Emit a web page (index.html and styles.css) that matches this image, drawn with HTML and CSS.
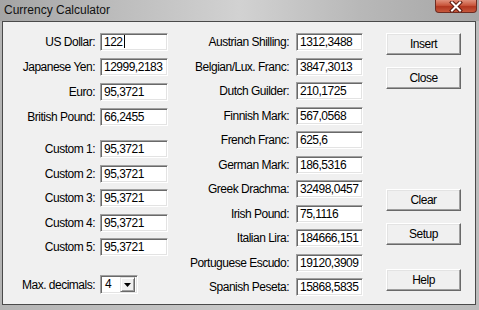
FILE: index.html
```html
<!DOCTYPE html>
<html lang="en">
<head>
    <meta charset="UTF-8">
    <title>Currency Calculator</title>
    <link rel="stylesheet" href="styles.css">
</head>
<body>

    <div class="window">
        <div class="titlebar">
            <span class="title">Currency Calculator</span>
            <div class="close-btn">
                <svg width="16" height="11" viewBox="0 0 16 11">
                    <path d="M4 1.5 L12 9.5 M12 1.5 L4 9.5" stroke="#5a1a10" stroke-width="4" stroke-linecap="square"/>
                    <path d="M4 1.5 L12 9.5 M12 1.5 L4 9.5" stroke="#ffffff" stroke-width="2" stroke-linecap="square"/>
                </svg>
            </div>
        </div>

        <div class="client">
            <div class="col-left">
                <div class="rows rows-main">
                    <label>US Dollar:</label><div class="field">122<span class="caret"></span></div>
                    <label>Japanese Yen:</label><div class="field">12999,2183</div>
                    <label>Euro:</label><div class="field">95,3721</div>
                    <label>British Pound:</label><div class="field">66,2455</div>
                </div>
                <div class="rows rows-custom">
                    <label>Custom 1:</label><div class="field">95,3721</div>
                    <label>Custom 2:</label><div class="field">95,3721</div>
                    <label>Custom 3:</label><div class="field">95,3721</div>
                    <label>Custom 4:</label><div class="field">95,3721</div>
                    <label>Custom 5:</label><div class="field">95,3721</div>
                </div>
                <div class="rows rows-decimals">
                    <label>Max. decimals:</label>
                    <div class="combo">
                        <span class="combo-value">4</span>
                        <span class="combo-btn">
                            <svg width="7" height="4" viewBox="0 0 7 4"><path d="M0 0 H7 L3.5 4 Z" fill="#000"/></svg>
                        </span>
                    </div>
                </div>
            </div>

            <div class="rows col-right">
                <label>Austrian Shilling:</label><div class="field">1312,3488</div>
                <label>Belgian/Lux. Franc:</label><div class="field">3847,3013</div>
                <label>Dutch Guilder:</label><div class="field">210,1725</div>
                <label>Finnish Mark:</label><div class="field">567,0568</div>
                <label>French Franc:</label><div class="field">625,6</div>
                <label>German Mark:</label><div class="field">186,5316</div>
                <label>Greek Drachma:</label><div class="field">32498,0457</div>
                <label>Irish Pound:</label><div class="field">75,1116</div>
                <label>Italian Lira:</label><div class="field">184666,151</div>
                <label>Portuguese Escudo:</label><div class="field">19120,3909</div>
                <label>Spanish Peseta:</label><div class="field">15868,5835</div>
            </div>

            <div class="buttons">
                <button class="btn btn-insert">Insert</button>
                <button class="btn btn-close">Close</button>
                <button class="btn btn-clear">Clear</button>
                <button class="btn btn-setup">Setup</button>
                <button class="btn btn-help">Help</button>
            </div>
        </div>
    </div>

</body>
</html>
```

FILE: styles.css
```css
body {
    margin: 0;
    background-color: #c4c4c4;
    font-family: "Liberation Sans", Arial, sans-serif;
    font-size: 12px;
    letter-spacing: -0.5px;
    color: #000;
}
.window {
    width: 479px;
    height: 310px;
    display: flex;
    flex-direction: column;
    background: linear-gradient(to right, #b4b4b4, #c8c8c8 50%, #bcbcbc);
}
.titlebar {
    height: 21px;
    display: flex;
    justify-content: space-between;
    background: linear-gradient(to right, #a4a4a4 0%, #bdbdbd 25%, #d2d2d2 50%, #b8b8b8 75%, #a6a6a6 100%);
}
.title {
    font-size: 12px;
    letter-spacing: 0;
    padding: 3px 0 0 4px;
    color: #111;
}
.close-btn {
    width: 42px;
    height: 13px;
    margin-right: 2px;
    box-sizing: border-box;
    border: 1px solid #6e2c22;
    border-top: none;
    border-radius: 0 0 4px 4px;
    background: linear-gradient(to bottom, #e0907c, #c9563c 45%, #b1361f 55%, #c7583c);
    display: flex;
    justify-content: center;
    align-items: center;
}
.client {
    flex: 1;
    margin: 0 3px 5px 2px;
    border: 1px solid #4a4a4a;
    background-color: #f0f0f0;
    display: flex;
    padding-top: 11px;
}
.rows {
    display: grid;
    align-items: center;
    grid-auto-rows: 18px;
    column-gap: 5px;
}
.rows label {
    text-align: right;
    white-space: nowrap;
    line-height: 18px;
}
.col-left {
    display: flex;
    flex-direction: column;
}
.rows-main {
    grid-template-columns: 92px 68px;
    row-gap: 7px;
}
.rows-custom {
    grid-template-columns: 92px 68px;
    row-gap: 6.5px;
    margin-top: 14px;
}
.rows-decimals {
    grid-template-columns: 92px 38px;
    grid-auto-rows: 19px;
    margin-top: 19px;
}
.col-right {
    grid-template-columns: 121px 67px;
    column-gap: 7px;
    row-gap: 6.5px;
    align-content: start;
}
.field {
    height: 18px;
    box-sizing: border-box;
    background-color: #fff;
    border: 1px solid;
    border-color: #a0a0a0 #fff #fff #a0a0a0;
    box-shadow: inset 1px 1px 0 #696969, inset -1px -1px 0 #e3e3e3;
    padding: 0 0 0 3px;
    line-height: 16px;
    white-space: nowrap;
    overflow: hidden;
}
.caret {
    display: inline-block;
    width: 1px;
    height: 13px;
    margin-left: 1px;
    background-color: #000;
    vertical-align: -2px;
}
.combo {
    height: 19px;
    box-sizing: border-box;
    background-color: #fff;
    border: 1px solid;
    border-color: #a0a0a0 #fff #fff #a0a0a0;
    box-shadow: inset 1px 1px 0 #696969, inset -1px -1px 0 #e3e3e3;
    display: flex;
    align-items: center;
    padding: 2px 2px 2px 4px;
}
.combo-value {
    flex: 1;
    line-height: 15px;
}
.combo-btn {
    width: 15px;
    height: 15px;
    box-sizing: border-box;
    background-color: #f0f0f0;
    border: 1px solid;
    border-color: #e3e3e3 #696969 #696969 #e3e3e3;
    box-shadow: inset 1px 1px 0 #fff, inset -1px -1px 0 #a0a0a0;
    display: flex;
    justify-content: center;
    align-items: center;
}
.buttons {
    display: flex;
    flex-direction: column;
    margin-left: 23px;
}
.btn {
    width: 75px;
    height: 22px;
    padding: 0;
    font: inherit;
    letter-spacing: inherit;
    color: #000;
    background-color: #f0f0f0;
    border: 1px solid;
    border-color: #fff #696969 #696969 #fff;
    box-shadow: inset -1px -1px 0 #a0a0a0, inset 1px 1px 0 #e3e3e3;
}
.btn-close {
    margin-top: 12px;
}
.btn-clear {
    margin-top: 100px;
}
.btn-setup {
    margin-top: 12px;
}
.btn-help {
    margin-top: 24px;
}
```
